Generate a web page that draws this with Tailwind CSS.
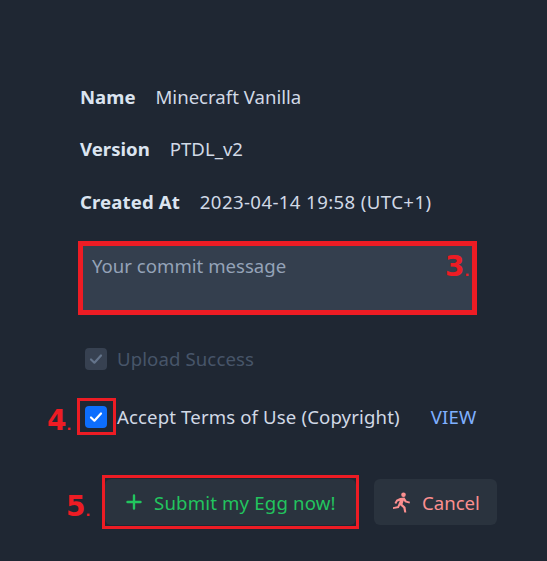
<!DOCTYPE html>
<html lang="en">
  <head>
    <meta charset="UTF-8" />
    <title>Submit Egg</title>
    <script src="https://cdn.jsdelivr.net/npm/@tailwindcss/browser@4"></script>
  </head>
  <body class="bg-[#1f2733] font-['Noto_Sans',sans-serif] overflow-hidden">
    <main class="relative w-[547px] h-[561px] pt-[83px] pl-[80px] text-[18.6px] text-[#d1d9e6]">
      <!-- Details -->
      <div class="flex flex-col gap-[25px] leading-[27px]">
        <div class="flex gap-[20px]"><b class="font-bold text-[#dbe4f0]">Name</b><span>Minecraft Vanilla</span></div>
        <div class="flex gap-[20px]"><b class="font-bold text-[#dbe4f0]">Version</b><span>PTDL_v2</span></div>
        <div class="flex gap-[20px] mt-[1px]"><b class="font-bold text-[#dbe4f0] tracking-[0.1px]">Created At</b><span class="tracking-[0.4px]">2023-04-14 19:58 (UTC+1)</span></div>
      </div>

      <!-- Commit message -->
      <div class="mt-[26px] w-[397px] h-[74px] bg-[#343f4e] px-[12px] pt-[11px] leading-[27px] text-[#94a3b8]">Your commit message</div>

      <!-- Upload success -->
      <div class="mt-[30px] ml-[5px] flex items-center gap-[10px] text-[#475569] leading-[27px]">
        <span class="w-[22px] h-[22px] rounded-[4px] bg-[#374151] flex items-center justify-center">
          <svg width="16" height="16" viewBox="0 0 16 16" fill="none" stroke="#64748b" stroke-width="2.2" stroke-linecap="round" stroke-linejoin="round"><path d="M3 8.500l3.400 3.200L13 4.500" /></svg>
        </span>
        <span class="tracking-[0.1px]">Upload Success</span>
      </div>

      <!-- Terms -->
      <div class="mt-[31px] ml-[5px] flex items-center leading-[27px]">
        <span class="w-[22px] h-[22px] rounded-[4px] bg-[#0d6efd] flex items-center justify-center mr-[10px]">
          <svg width="16" height="16" viewBox="0 0 16 16" fill="none" stroke="#ffffff" stroke-width="2.2" stroke-linecap="round" stroke-linejoin="round"><path d="M3 8.500l3.400 3.200L13 4.500" /></svg>
        </span>
        <span class="tracking-[0.13px]">Accept Terms of Use (Copyright)</span>
        <a class="ml-[31px] text-[#7fb0ff] tracking-[0.2px]">VIEW</a>
      </div>

      <!-- Buttons -->
      <div class="mt-[49px] ml-[25px] flex gap-[18px] leading-[27px]">
        <button class="w-[251px] h-[46px] rounded-[6px] bg-[#2a333e] text-[#22c55e] flex items-center pl-[20px] gap-[11px]">
          <svg width="18" height="18" viewBox="0 0 18 18" fill="none" stroke="currentColor" stroke-width="2.4" stroke-linecap="round"><path d="M9 2.500v13M2.500 9h13" /></svg>
          <span class="tracking-[0.17px]">Submit my Egg now!</span>
        </button>
        <button class="w-[123px] h-[46px] rounded-[6px] bg-[#2a333e] text-[#fc8f8f] flex items-center pl-[18px] gap-[11px]">
          <svg width="19" height="21" viewBox="0 0 19 21" fill="currentColor"><circle cx="11.500" cy="2.800" r="2.300" /><path d="M8 6l4.500-.6 2 3.400 3.500 1-.5 1.800-4.600-1.300-1.200-1.700-1.200 3.600 3 2.800.8 5.500h-2l-1-4.600-3.200-2.600-1.300 2.800-5.800 1v-1.900l4.500-1 2.300-5.500-2.200.7-1.400 2.600-1.700-.9 1.800-3.400z" /></svg>
          <span>Cancel</span>
        </button>
      </div>

      <!-- Red annotations -->
      <div class="absolute left-[78px] top-[241px] w-[399px] h-[74px] border-[5px] border-[#ed1c24]"></div>
      <div class="absolute left-[77px] top-[398px] w-[39px] h-[37px] border-[3px] border-[#ed1c24]"></div>
      <div class="absolute left-[102px] top-[475px] w-[257px] h-[54px] border-[3px] border-[#ed1c24]"></div>
      <span class="absolute left-[445px] top-[248px] text-[28px] leading-[38px] font-bold text-[#ed1c24] font-['DejaVu_Sans',sans-serif]">3<span class="text-[13px] font-bold">.</span></span>
      <span class="absolute left-[47px] top-[402px] text-[28px] leading-[38px] font-bold text-[#ed1c24] font-['DejaVu_Sans',sans-serif]">4<span class="text-[13px] font-bold">.</span></span>
      <span class="absolute left-[66px] top-[488px] text-[28px] leading-[38px] font-bold text-[#ed1c24] font-['DejaVu_Sans',sans-serif]">5<span class="text-[13px] font-bold">.</span></span>
    </main>
  </body>
</html>
